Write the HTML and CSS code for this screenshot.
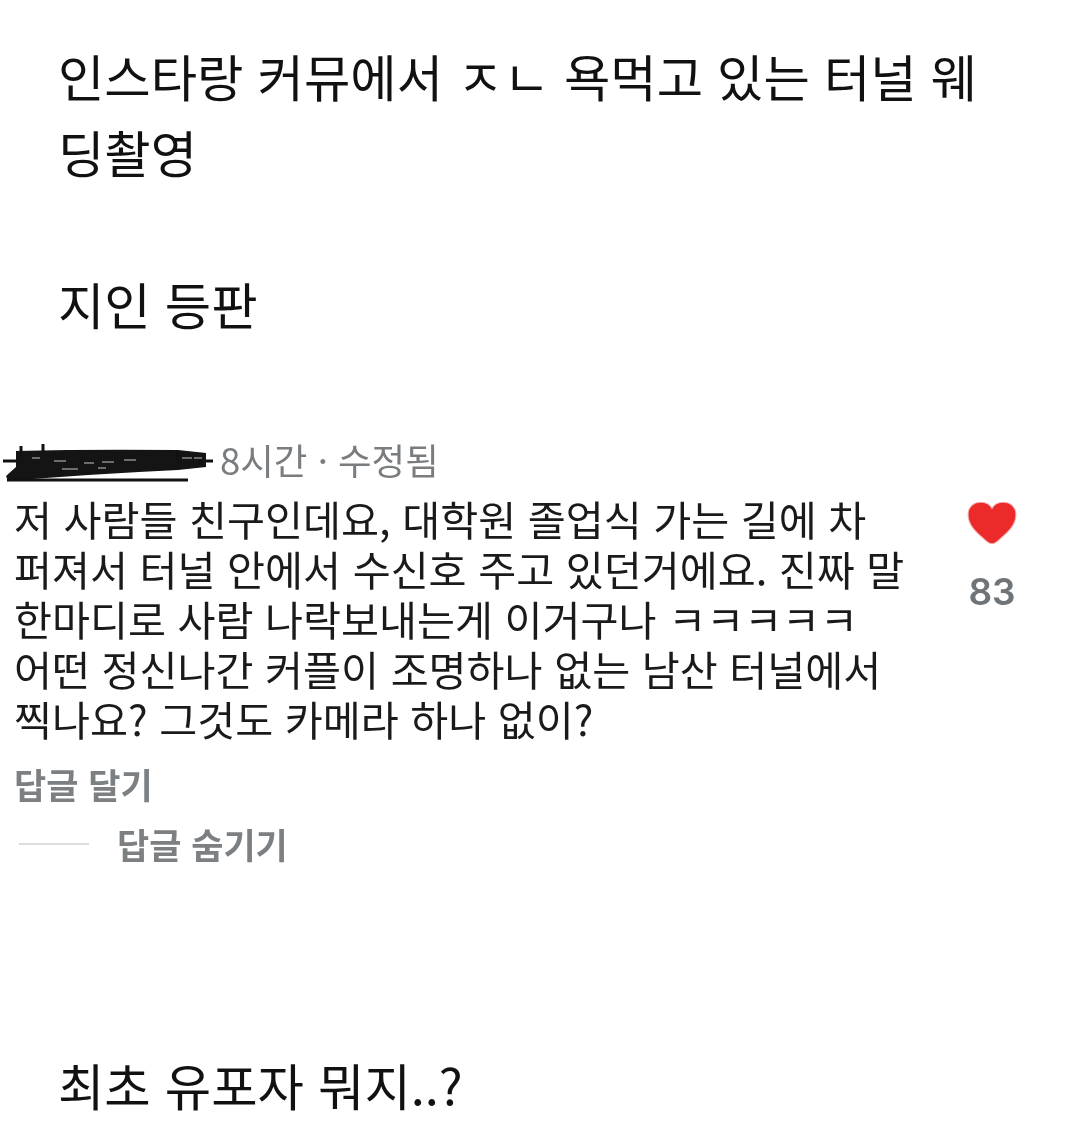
FILE: index.html
```html
<!DOCTYPE html>
<html lang="ko">
<head>
	<meta charset="utf-8">
	<title>터널 웨딩촬영</title>
	<link rel="stylesheet" href="styles.css">
</head>
<body>
	<div class="post">
		<p class="big title">인스타랑 커뮤에서 ㅈㄴ 욕먹고 있는 터널 웨<br>딩촬영</p>
		<p class="big friend">지인 등판</p>
	</div>

	<div class="comment">
		<div class="head">
			<svg class="scribble" width="212" height="40" viewBox="0 0 212 40">
				<path d="M1 18 H211" stroke="#111" stroke-width="3" fill="none"/>
				<path d="M14 8 Q90 6 176 7 L204 10 V24 L176 27 Q90 31 6 38 L4 33 L14 24 Z" fill="#141414"/>
				<path d="M5 37 H186" stroke="#111" stroke-width="3" fill="none"/>
				<path d="M19 3 V14 M41 1 V10 M176 8 V22 M198 10 V22" stroke="#111" stroke-width="3" fill="none"/>
				<path d="M30 15 H38 M52 18 H64 M82 20 H92 M100 19 H112 M122 17 H134 M180 15 H190 M192 15 H200 M60 26 H76 M96 25 H104" stroke="#8a8a8a" stroke-width="1.5" fill="none"/>
			</svg>
			<span class="meta">8시간 · 수정됨</span>
		</div>
		<div class="row">
			<div class="body">저 사람들 친구인데요, 대학원 졸업식 가는 길에 차<br>퍼져서 터널 안에서 수신호 주고 있던거에요. 진짜 말<br>한마디로 사람 나락보내는게 이거구나 ㅋㅋㅋㅋㅋ<br>어떤 정신나간 커플이 조명하나 없는 남산 터널에서<br>찍나요? 그것도 카메라 하나 없이?</div>
			<div class="like">
				<svg class="heart" width="52" height="46" viewBox="0 0 50 44">
					<path d="M25 42 C22 42 20 40 17 37 C10 31 2 24 2 14 C2 7 7 2 14 2 C19 2 23 4 25 8 C27 4 31 2 36 2 C43 2 48 7 48 14 C48 24 40 31 33 37 C30 40 28 42 25 42 Z" fill="#ec2a2a" stroke="#f6b0b0" stroke-width="1"/>
				</svg>
				<span class="count">83</span>
			</div>
		</div>
		<div class="reply">답글 달기</div>
		<div class="hide">
			<span class="line"></span>
			<span class="hide-text">답글 숨기기</span>
		</div>
	</div>

	<p class="big last">최초 유포자 뭐지..?</p>
</body>
</html>
```

FILE: styles.css
```css
html {
	box-sizing: border-box;
}
body {
	margin: 0;
	height: 1127px;
	overflow: hidden;
	background: #fff;
	color: #111;
	font-family: "Noto Sans CJK KR", "Noto Sans", sans-serif;
}
p {
	margin: 0;
}
.big {
	font-size: 50.4px;
	line-height: 76px;
	padding-left: 58px;
}
.post {
	padding-top: 38px;
}
.friend {
	margin-top: 76px;
}
.comment {
	margin-top: 98px;
	filter: blur(0.4px);
}
.head {
	display: flex;
	align-items: center;
	height: 40px;
}
.scribble {
	margin-left: 2px;
	margin-top: 6px;
	flex: none;
}
.meta {
	margin-left: 6px;
	font-size: 36.5px;
	line-height: 40px;
	color: #7a7d80;
}
.row {
	display: flex;
	justify-content: space-between;
	margin-top: 13px;
}
.body {
	padding-left: 14px;
	font-size: 41.3px;
	line-height: 50px;
	color: #1a1a1a;
}
.like {
	display: flex;
	flex-direction: column;
	align-items: center;
	width: 52px;
	margin-right: 62px;
	padding-top: 7px;
}
.heart {
	flex: none;
}
.count {
	margin-top: 24px;
	font-size: 37px;
	font-weight: 600;
	line-height: 44px;
	color: #6f7478;
	font-family: "Inter", sans-serif;
}
.reply {
	margin-top: 18px;
	padding-left: 14px;
	font-size: 35px;
	font-weight: 700;
	line-height: 46px;
	color: #7c8083;
}
.hide {
	display: flex;
	align-items: center;
	margin-top: 14px;
	padding-left: 19px;
}
.line {
	width: 70px;
	height: 2px;
	background: #dcdcdc;
}
.hide-text {
	margin-left: 28px;
	font-size: 35px;
	font-weight: 700;
	line-height: 46px;
	color: #7c8083;
}
.last {
	margin-top: 180px;
}
```
